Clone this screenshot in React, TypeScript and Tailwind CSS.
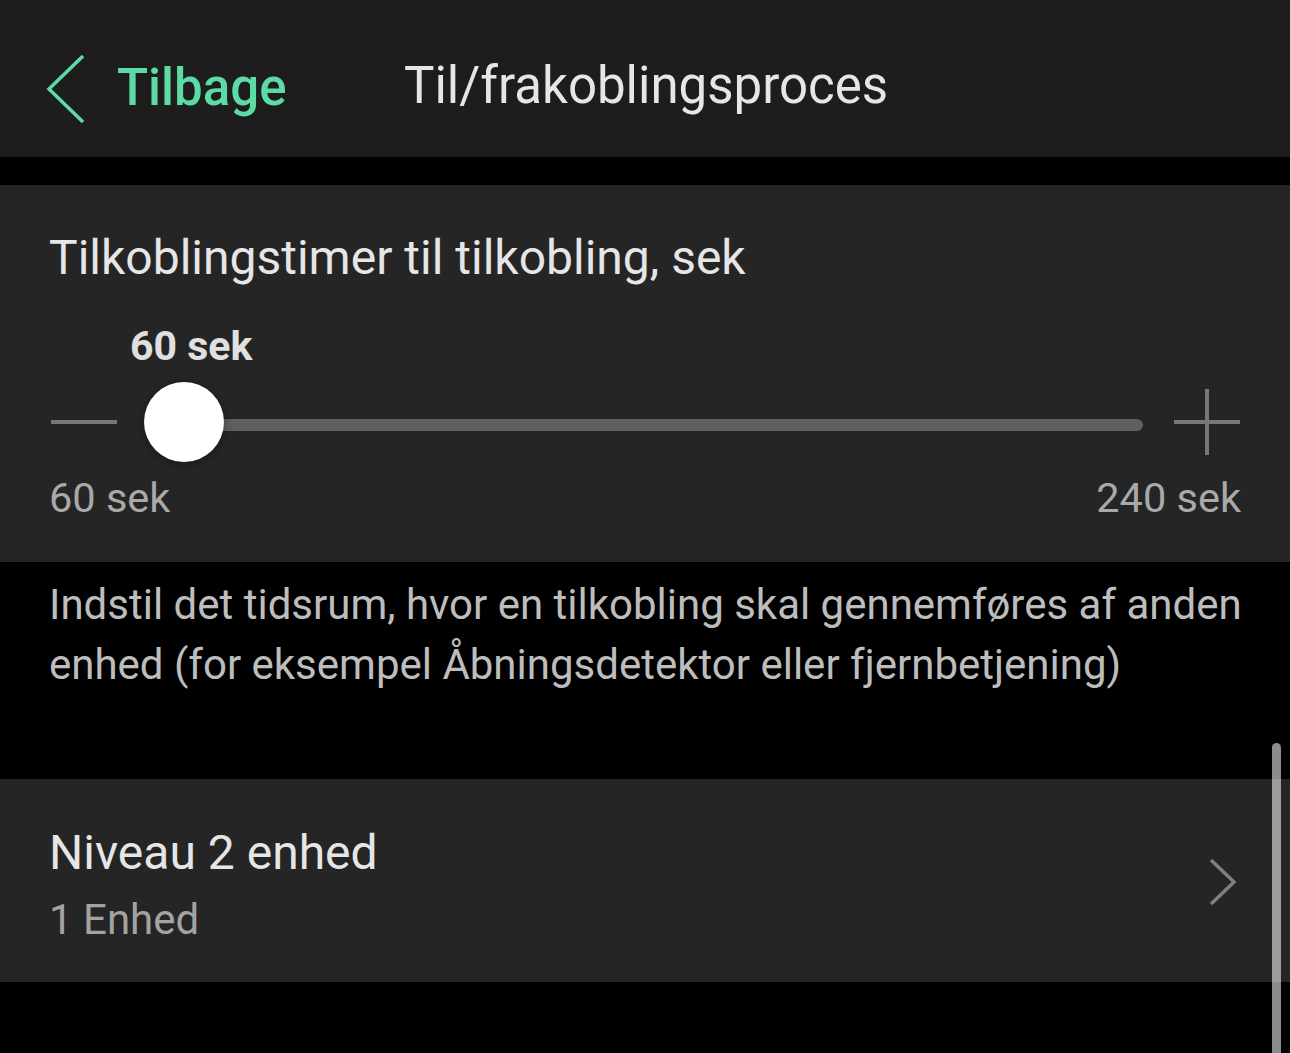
const font = { fontFamily: 'Roboto, "Noto Sans", sans-serif' };

const App = () => {
  return (
    <div className="relative w-[1290px] h-[1053px] bg-black overflow-hidden text-[#e4e4e4]" style={font}>
      {/* Header */}
      <div className="h-[157px] bg-[#1d1d1d] flex items-center pt-[20px]">
        <div className="flex items-center pl-[46px] w-[404px]">
          <svg width="40" height="68" viewBox="0 0 40 68" className="text-[#5cdba5]">
            <path d="M37 1 L3 34 L37 67" fill="none" stroke="currentColor" strokeWidth="3.5" />
          </svg>
          <span className="ml-[31px] text-[51px] font-medium text-[#5cdba5] leading-none -mt-[2px]">Tilbage</span>
        </div>
        <span className="text-[51px] text-[#e6e6e6] leading-none -mt-[6px]">Til/frakoblingsproces</span>
      </div>

      <div className="h-[28px]" />

      {/* Slider card */}
      <div className="bg-[#252525] px-[49px] pt-[44px] pb-[42px]">
        <div className="text-[48px] leading-[58px] text-[#e6e6e6]">Tilkoblingstimer til tilkobling, sek</div>
        <div className="mt-[37px] ml-[81px] text-[41px] leading-[44px] font-bold text-[#e0e0e0]">60 sek</div>
        <div className="relative mt-[14px] h-[80px] flex items-center">
          <div className="ml-[2px] w-[66px] h-[4px] bg-[#777777]" />
          <div className="ml-[68px] mt-[6px] w-[958px] h-[12px] bg-[#5f5f5f] rounded-full" />
          <div className="ml-[31px] relative w-[66px] h-[66px]">
            <div className="absolute left-0 top-[31px] w-[66px] h-[4px] bg-[#777777]" />
            <div className="absolute left-[31px] top-0 w-[4px] h-[66px] bg-[#777777]" />
          </div>
          <div className="absolute left-[95px] top-0 w-[80px] h-[80px] rounded-full bg-white shadow-[0_2px_10px_rgba(0,0,0,0.35)]" />
        </div>
        <div className="mt-[14px] flex justify-between text-[41.5px] leading-[44px] text-[#a9a9a9]">
          <span>60 sek</span>
          <span>240 sek</span>
        </div>
      </div>

      {/* Description */}
      <div className="pl-[49px] pr-[30px] pt-[13px] pb-[84px] text-[42px] leading-[60px] text-[#bdbdbd]">
        Indstil det tidsrum, hvor en tilkobling skal gennemføres af anden enhed (for eksempel Åbningsdetektor eller fjernbetjening)
      </div>

      {/* Niveau row */}
      <div className="h-[203px] bg-[#252525] pl-[49px] pr-[52px] flex items-center justify-between">
        <div className="flex flex-col pt-[8px]">
          <span className="text-[48px] leading-[60px] text-[#e6e6e6]">Niveau 2 enhed</span>
          <span className="mt-[10px] text-[42px] leading-[54px] text-[#a3a3a3]">1 Enhed</span>
        </div>
        <svg width="30" height="48" viewBox="0 0 30 48" className="text-[#7f7f7f] mt-[2px]">
          <path d="M3 2 L26 24 L3 46" fill="none" stroke="currentColor" strokeWidth="3.5" />
        </svg>
      </div>

      {/* Scrollbar */}
      <div className="absolute left-[1272px] top-[743px] w-[9px] h-[330px] rounded-full bg-white/55" />
    </div>
  );
};

export default App;
